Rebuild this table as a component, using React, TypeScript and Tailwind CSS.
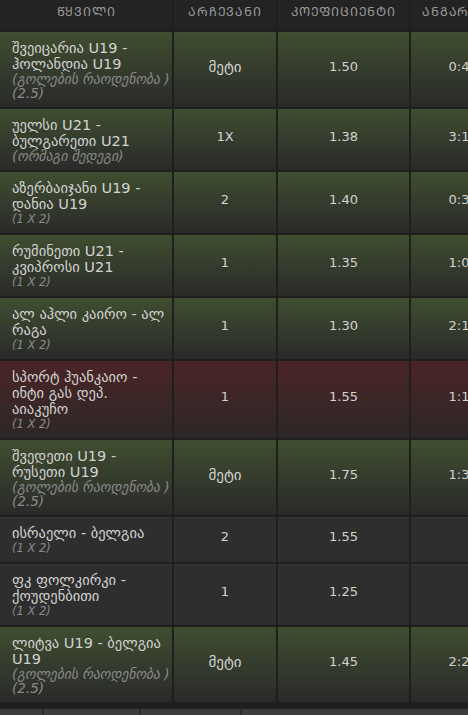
const rows = [
  { title: 'შვეიცარია U19 - ჰოლანდია U19', sub: '(გოლების რაოდენობა ) (2.5)', pick: 'მეტი', odd: '1.50', score: '0:4', tone: 'green' },
  { title: 'უელსი U21 - ბულგარეთი U21', sub: '(ორმაგი შედეგი)', pick: '1X', odd: '1.38', score: '3:1', tone: 'green' },
  { title: 'აზერბაიჯანი U19 - დანია U19', sub: '(1 X 2)', pick: '2', odd: '1.40', score: '0:3', tone: 'green' },
  { title: 'რუმინეთი U21 - კვიპროსი U21', sub: '(1 X 2)', pick: '1', odd: '1.35', score: '1:0', tone: 'green' },
  { title: 'ალ აჰლი კაირო - ალ რაგა', sub: '(1 X 2)', pick: '1', odd: '1.30', score: '2:1', tone: 'green' },
  { title: 'სპორტ ჰუანკაიო - ინტი გას დეპ.\nაიაკუჩო', sub: '(1 X 2)', pick: '1', odd: '1.55', score: '1:1', tone: 'red' },
  { title: 'შვედეთი U19 - რუსეთი U19', sub: '(გოლების რაოდენობა ) (2.5)', pick: 'მეტი', odd: '1.75', score: '1:3', tone: 'green' },
  { title: 'ისრაელი - ბელგია', sub: '(1 X 2)', pick: '2', odd: '1.55', score: '', tone: 'gray' },
  { title: 'ფკ ფოლკირკი - ქოუდენბითი', sub: '(1 X 2)', pick: '1', odd: '1.25', score: '', tone: 'gray' },
  { title: 'ლიტვა U19 - ბელგია U19', sub: '(გოლების რაოდენობა ) (2.5)', pick: 'მეტი', odd: '1.45', score: '2:2', tone: 'green' },
]

// mtavruli (capital georgian) headers
const headers = [
  '\u1CAC\u1CA7\u1C95\u1C98\u1C9A\u1C98',
  '\u1C90\u1CA0\u1CA9\u1C94\u1C95\u1C90\u1C9C\u1C98',
  '\u1C99\u1C9D\u1C94\u1CA4\u1C98\u1CAA\u1C98\u1C94\u1C9C\u1CA2\u1C98',
  '\u1C90\u1C9C\u1C92\u1C90\u1CA0\u1C98\u1CA8\u1C98',
]

const toneClass: Record<string, string> = {
  green: 'bg-linear-to-b from-[#3f4e2f] to-[#2a2a29]',
  red: 'bg-linear-to-b from-[#4b2425] to-[#2c2727]',
  gray: 'bg-[#2e2e2e] shadow-[inset_0_1px_0_#363636]',
}

const isGeo = (s: string) => /[\u10D0-\u10FF]/.test(s)

export default function App() {
  return (
    <div className="h-[715px] w-[468px] overflow-hidden bg-[#1f1f1f] font-['DejaVu_Sans',sans-serif]">
      <div className="grid w-[507px] grid-cols-[172px_102px_131px_96px] gap-[2px]">
        {headers.map((h) => (
          <div
            key={h}
            className="flex h-[30px] items-center justify-center whitespace-nowrap bg-[#232323] pb-[6px] text-[12.5px] tracking-[0.8px] text-[#9a9a9a]"
          >
            {h}
          </div>
        ))}

        {rows.map((r) => (
          <Row key={r.title} {...r} />
        ))}
      </div>

      <div className="mt-[7px] flex h-[14px] gap-[2px] bg-[#2a2a2a]">
        <div className="w-[42px] bg-[#3b3b3b]" />
        <div className="w-[95px] bg-[#3b3b3b]" />
        <div className="w-[99px] bg-[#3b3b3b]" />
        <div className="flex-1 bg-[#3b3b3b]" />
      </div>
    </div>
  )
}

function Row({
  title,
  sub,
  pick,
  odd,
  score,
  tone,
}: {
  title: string
  sub: string
  pick: string
  odd: string
  score: string
  tone: string
}) {
  const bg = toneClass[tone]
  const subSize = isGeo(sub) ? 'text-[13.5px]' : 'text-[11.5px]'
  const pickSize = isGeo(pick) ? 'text-[15px]' : 'text-[13px]'
  return (
    <>
      <div className={`${bg} pb-[7px] pl-[12px] pt-[8px]`}>
        <p className="whitespace-pre-line text-[14.5px] leading-[16px] text-[#d2d2d2]">{title}</p>
        <p className={`${subSize} italic leading-[14px] text-[#8a8a8a]`}>{sub}</p>
      </div>
      <div className={`${bg} flex items-center justify-center pb-[5px] ${pickSize} text-[#d2d2d2]`}>
        {pick}
      </div>
      <div className={`${bg} flex items-center justify-center pb-[5px] text-[13px] text-[#d2d2d2]`}>{odd}</div>
      <div className={`${bg} flex items-center justify-center pb-[5px] text-[13px] text-[#d2d2d2]`}>{score}</div>
    </>
  )
}
